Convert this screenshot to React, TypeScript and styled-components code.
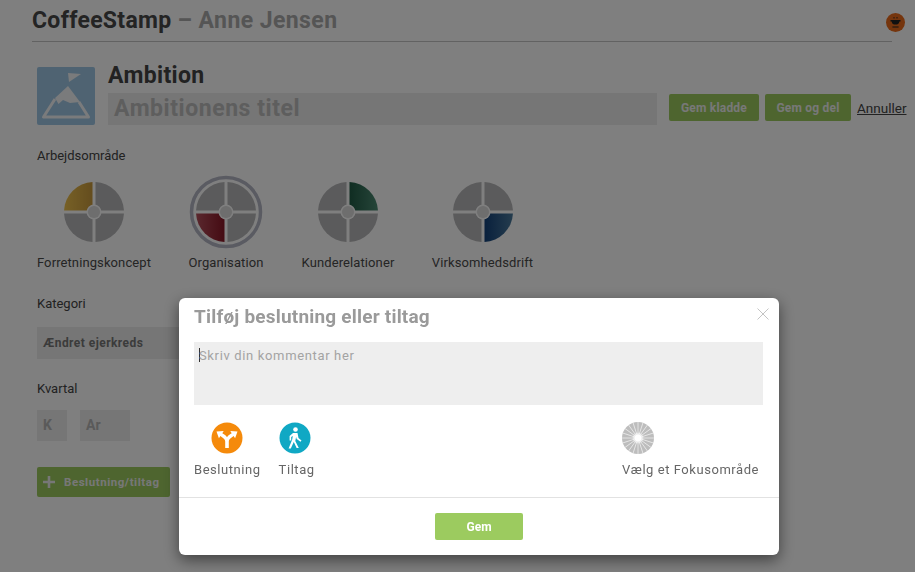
import React from "react";
import styled, { createGlobalStyle } from "styled-components";

const Global = createGlobalStyle`
  html, body { margin: 0; padding: 0; height: 100%; background: #fff; overflow: hidden; }
  body { font-family: Roboto, "Liberation Sans", sans-serif; color: #444; }
`;

const Page = styled.div`
  position: relative;
  width: 915px;
  height: 572px;
  overflow: hidden;
  box-sizing: border-box;
  padding: 0 8px 0 32px;
`;
const Header = styled.header`
  display: flex;
  align-items: center;
  justify-content: space-between;
  height: 41px;
  width: 860px;
  border-bottom: 1px solid #c4c4c4;
  box-sizing: content-box;
`;
const Brand = styled.h1`
  margin: 0;
  font-size: 23px;
  font-weight: 700;
  letter-spacing: 0.3px;
  color: #484848;
  span { color: #aaa; letter-spacing: 0.42px; }
`;
const Avatar = styled.div`
  width: 19px;
  height: 19px;
  border-radius: 50%;
  background: #ea6a1b;
  display: flex;
  align-items: center;
  justify-content: center;
  margin-right: -13px;
  margin-top: 3px;
`;
const TitleRow = styled.div`
  display: flex;
  align-items: flex-end;
  margin: 25px 0 0 5px;
  height: 58px;
`;
const IconTile = styled.div`
  width: 58px;
  height: 58px;
  flex: none;
  border-radius: 2px;
  background: #9fc6e4;
  margin-right: 13px;
`;
const TitleCol = styled.div`
  width: 549px;
  margin-right: 12px;
`;
const H2 = styled.h2`
  margin: 0 0 5px;
  font-size: 23px;
  line-height: 25px;
  font-weight: 700;
  letter-spacing: 0.35px;
  color: #444;
`;
const TitleInput = styled.div`
  height: 32px;
  background: #ececec;
  padding-left: 6px;
  font-size: 23px;
  line-height: 31px;
  font-weight: 700;
  letter-spacing: 0.55px;
  color: #bcbcbc;
`;
const Actions = styled.div`
  display: flex;
  align-items: center;
  height: 27px;
  margin-bottom: 4px;
`;
const Btn = styled.div<{ $w: number }>`
  width: ${(p) => p.$w}px;
  height: 27px;
  margin-right: 6px;
  border-radius: 2px;
  background: #9ccb5f;
  color: #f0f0f0;
  font-size: 12px;
  font-weight: 700;
  letter-spacing: 0.2px;
  display: flex;
  align-items: center;
  justify-content: center;
`;
const CancelLink = styled.span`
  font-size: 13.5px;
  color: #444;
  text-decoration: underline;
`;
const Label = styled.div`
  font-size: 13px;
  line-height: 16px;
  color: #444;
`;
const AreaLabel = styled(Label)`
  margin: 23px 0 0 5px;
`;
const Areas = styled.div`
  display: flex;
  gap: 38px;
  margin: 10px 0 0 5px;
`;
const Area = styled.div<{ $w: number }>`
  width: ${(p) => p.$w}px;
  display: flex;
  flex-direction: column;
  align-items: center;
  font-size: 13px;
  letter-spacing: 0.1px;
  color: #4a4a4a;
  white-space: nowrap;
`;
const Wheel = styled.svg`
  display: block;
  width: 76px;
  height: 76px;
  margin-bottom: 5px;
`;
const FormRow = styled.div`
  display: flex;
  margin: 26px 0 0 5px;
`;
const Column = styled.div<{ $w: number }>`
  width: ${(p) => p.$w}px;
`;
const Select = styled.div`
  margin-top: 15px;
  width: 250px;
  height: 32px;
  background: #ececec;
  padding-left: 6px;
  box-sizing: border-box;
  font-size: 12px;
  font-weight: 700;
  line-height: 32px;
  letter-spacing: 0.45px;
  color: #777;
`;
const QuarterLabel = styled(Label)`
  margin: 22px 0 0 5px;
`;
const QuarterRow = styled.div`
  display: flex;
  gap: 13px;
  margin: 13px 0 0 5px;
`;
const SmallInput = styled.div<{ $w: number }>`
  width: ${(p) => p.$w}px;
  height: 31px;
  padding-left: 6px;
  box-sizing: border-box;
  background: #ececec;
  font-size: 14px;
  font-weight: 700;
  line-height: 30px;
  color: #b4b4b4;
`;
const AddBtn = styled.div`
  width: 133px;
  height: 30px;
  margin: 26px 0 0 5px;
  border-radius: 2px;
  background: #9ccb5f;
  color: #efefef;
  display: flex;
  align-items: center;
  gap: 9px;
  padding-left: 6px;
  box-sizing: border-box;
  font-size: 11.5px;
  font-weight: 700;
  letter-spacing: 0.55px;
  white-space: nowrap;
`;
const Overlay = styled.div`
  position: fixed;
  inset: 0;
  background: rgba(0, 0, 0, 0.5);
`;
const Modal = styled.div`
  position: fixed;
  left: 179px;
  top: 298px;
  width: 600px;
  height: 257px;
  background: #fff;
  border-radius: 6px;
  box-shadow: 0 5px 15px rgba(0, 0, 0, 0.5);
  display: flex;
  flex-direction: column;
`;
const ModalHead = styled.div`
  height: 37px;
  margin-bottom: 7px;
  padding: 0 15px;
  position: relative;
  display: flex;
  align-items: center;
`;
const ModalTitle = styled.h3`
  margin: 0;
  font-size: 19px;
  font-weight: 700;
  color: #9a9a9a;
  letter-spacing: 0.2px;
`;
const Close = styled.svg`
  position: absolute;
  right: 9px;
  top: 9px;
  width: 14px;
  height: 14px;
`;
const Comment = styled.div`
  margin: 0 16px 0 15px;
  height: 63px;
  background: #eeeeee;
  padding: 6px 0 0 5px;
  box-sizing: border-box;
  font-size: 13px;
  line-height: 15px;
  letter-spacing: 0.65px;
  color: #a3a3a3;
`;
const Caret = styled.span`
  display: inline-block;
  width: 1px;
  height: 14px;
  margin-right: -1px;
  vertical-align: -2px;
  background: #333;
`;
const Choices = styled.div`
  display: flex;
  height: 93px;
  padding: 17px 20px 0 15px;
  box-sizing: border-box;
  border-bottom: 1px solid #e2e2e2;
`;
const Choice = styled.div<{ $push?: boolean; $start?: boolean }>`
  display: flex;
  flex-direction: column;
  align-items: ${(p) => (p.$start ? "flex-start" : "center")};
  gap: 8px;
  font-size: 13px;
  line-height: 16px;
  letter-spacing: 0.55px;
  color: #666;
  margin-right: 18px;
  margin-left: ${(p) => (p.$push ? "auto" : "0")};
  &:last-child { margin-right: 0; }
`;
const ModalFoot = styled.div`
  flex: 1;
  display: flex;
  align-items: center;
  justify-content: center;
`;
const SaveBtn = styled.div`
  width: 88px;
  height: 27px;
  border-radius: 2px;
  background: #9ccb5f;
  color: #fff;
  font-size: 12px;
  font-weight: 700;
  display: flex;
  align-items: center;
  justify-content: center;
`;

const sector = (q: number) => {
  const r = 30, c = 38, g = 1.5;
  const [sx, sy] = [[1, -1], [1, 1], [-1, 1], [-1, -1]][q];
  const far = Math.sqrt(r * r - g * g);
  const x0 = c + sx * g, y0 = c + sy * g;
  const x1 = c + sx * g, y1 = c + sy * far;
  const x2 = c + sx * far, y2 = c + sy * g;
  const sweep = sx * sy < 0 ? 1 : 0;
  return `M${x0} ${y0}L${x1} ${y1}A${r} ${r} 0 0 ${sweep} ${x2} ${y2}Z`;
};

type W = { id: string; q: number; from: string; to: string; ring?: boolean };
const Wheel4 = ({ id, q, from, to, ring }: W) => (
  <Wheel viewBox="0 0 76 76">
    <defs>
      <linearGradient id={id} x1="0" y1="0" x2="1" y2="0">
        <stop offset="0" stopColor={from} />
        <stop offset="1" stopColor={to} />
      </linearGradient>
    </defs>
    {ring && <circle cx="38" cy="38" r="34.5" fill="none" stroke="#b4b6c4" strokeWidth="3.5" />}
    {[0, 1, 2, 3].map((i) => (
      <path key={i} d={sector(i)} fill={i === q ? `url(#${id})` : "#b6b6b8"} />
    ))}
    <circle cx="38" cy="38" r="7.5" fill="#fff" />
    <circle cx="38" cy="38" r="6" fill="#dcdcdc" />
  </Wheel>
);

const Rays = () => {
  const rays = Array.from({ length: 20 }, (_, i) => (i * 360) / 20);
  return (
    <svg width="32" height="32" viewBox="0 0 32 32">
      <defs>
        <radialGradient id="glow">
          <stop offset="0" stopColor="#fff" />
          <stop offset="0.5" stopColor="#fff" />
          <stop offset="1" stopColor="#fff" stopOpacity="0" />
        </radialGradient>
      </defs>
      <circle cx="16" cy="16" r="16" fill="#bdbdbd" />
      {rays.map((a) => (
        <line key={a} x1="16" y1="12" x2="16" y2="0" stroke="#e6e6e6" strokeWidth="0.9" transform={`rotate(${a} 16 16)`} />
      ))}
      <circle cx="16" cy="16" r="6" fill="url(#glow)" />
    </svg>
  );
};

export default function App() {
  return (
    <Page>
      <Global />
      <Header>
        <Brand>
          CoffeeStamp <span>– Anne Jensen</span>
        </Brand>
        <Avatar>
          <svg width="13" height="13" viewBox="0 0 13 13">
            <path d="M5 1v1.5M8 1v1.5" stroke="#222" strokeWidth="0.9" />
            <path d="M1.5 4h10v1.4H10.4C10 7.5 8.6 8.6 6.5 8.6S3 7.5 2.6 5.4H1.5z" fill="#222" />
            <path d="M3.4 10.5h6.2v1H3.4z" fill="#222" />
          </svg>
        </Avatar>
      </Header>

      <TitleRow>
        <IconTile>
          <svg width="58" height="58" viewBox="0 0 58 58">
            <path d="M31 6l13 1-12 8z" fill="#f4f6f8" />
            <path d="M18 32L6.5 50h45L42 35" fill="none" stroke="#f4f6f8" strokeWidth="3" strokeLinejoin="round" />
            <path d="M31 19L18 31l3.5 6 4.5-4 7 3 10-1z" fill="#f4f6f8" />
          </svg>
        </IconTile>
        <TitleCol>
          <H2>Ambition</H2>
          <TitleInput>Ambitionens titel</TitleInput>
        </TitleCol>
        <Actions>
          <Btn $w={90}>Gem kladde</Btn>
          <Btn $w={86}>Gem og del</Btn>
          <CancelLink>Annuller</CancelLink>
        </Actions>
      </TitleRow>

      <AreaLabel>Arbejdsområde</AreaLabel>
      <Areas>
        <Area $w={114}>
          <Wheel4 id="a" q={3} from="#efc24d" to="#c99a3c" />
          Forretningskoncept
        </Area>
        <Area $w={74}>
          <Wheel4 id="b" q={2} from="#b4505c" to="#8a1626" ring />
          Organisation
        </Area>
        <Area $w={94}>
          <Wheel4 id="c" q={0} from="#1f5a44" to="#4c8a72" />
          Kunderelationer
        </Area>
        <Area $w={99}>
          <Wheel4 id="d" q={1} from="#12407a" to="#4a7a9c" />
          Virksomhedsdrift
        </Area>
      </Areas>

      <FormRow>
        <Column $w={275}>
          <Label>Kategori</Label>
          <Select>Ændret ejerkreds</Select>
        </Column>
        <Column $w={200}>
          <Label>Beskrivelse</Label>
        </Column>
      </FormRow>

      <QuarterLabel>Kvartal</QuarterLabel>
      <QuarterRow>
        <SmallInput $w={30}>K</SmallInput>
        <SmallInput $w={50}>Ar</SmallInput>
      </QuarterRow>

      <AddBtn>
        <svg width="12" height="12" viewBox="0 0 12 12">
          <path d="M6 0v12M0 6h12" stroke="#efefef" strokeWidth="2.6" />
        </svg>
        Beslutning/tiltag
      </AddBtn>

      <Overlay />
      <Modal>
        <ModalHead>
          <ModalTitle>Tilføj beslutning eller tiltag</ModalTitle>
          <Close viewBox="0 0 14 14">
            <path d="M1.5 1.5l11 11M12.5 1.5l-11 11" stroke="#c4c4c4" strokeWidth="1" />
          </Close>
        </ModalHead>
        <Comment>
          <Caret />
          Skriv din kommentar her
        </Comment>
        <Choices>
          <Choice>
            <svg width="32" height="32" viewBox="0 0 32 32">
              <circle cx="16" cy="16" r="15.5" fill="#f58a0b" />
              <path d="M14.2 26v-6.5c0-2-1.2-3-3.2-4.3l-1.6-1.1-1.5 2.2L5.5 9.5l7.2-.6-1.4 2.3 2 1.2c1.3.8 2.2 1.7 2.7 2.9.5-1.2 1.4-2.1 2.7-2.9l2-1.2-1.4-2.3 7.2.6-2.4 6.8-1.5-2.2-1.6 1.1c-2 1.3-3.2 2.3-3.2 4.3V26z" fill="#fff" />
            </svg>
            Beslutning
          </Choice>
          <Choice $start>
            <svg width="32" height="32" viewBox="0 0 32 32">
              <circle cx="16" cy="16" r="15.5" fill="#10a8c4" />
              <circle cx="16.5" cy="7.5" r="2.3" fill="#fff" />
              <path d="M14 11h4.5l1 5 3 2.5-1 1.2-3.8-2.8-.6-1.9-.8 4 3.5 7h-2.2L14.8 20l-3 6.6H9.6l3.6-9 .6-3.6-1.6 1v3.6h-1.6v-4.6z" fill="#fff" />
            </svg>
            Tiltag
          </Choice>
          <Choice $push $start>
            <Rays />
            Vælg et Fokusområde
          </Choice>
        </Choices>
        <ModalFoot>
          <SaveBtn>Gem</SaveBtn>
        </ModalFoot>
      </Modal>
    </Page>
  );
}
